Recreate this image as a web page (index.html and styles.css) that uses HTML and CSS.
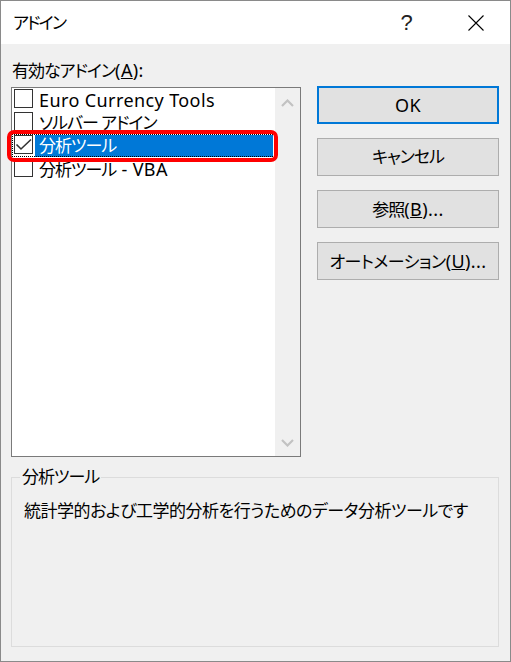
FILE: index.html
```html
<!DOCTYPE html>
<html lang="ja">
<head>
<meta charset="utf-8">
<title>アドイン</title>
<link rel="stylesheet" href="styles.css">
</head>
<body>
<div class="window">
  <div class="titlebar">
    <span class="title">アドイン</span>
    <div class="tb-btn help">?</div>
    <div class="tb-btn close">
      <svg width="16" height="16" viewBox="0 0 16 16"><path d="M0.5 0.5L15.5 15.5M15.5 0.5L0.5 15.5" stroke="#000" stroke-width="1.1" fill="none"/></svg>
    </div>
  </div>
  <div class="body">
    <div class="main">
      <div class="left">
        <div class="label">有効なアドイン<span class="en">(<u>A</u>):</span></div>
        <div class="listbox">
          <ul class="items">
            <li class="item"><span class="cb"></span><span class="text"><span class="en">Euro Currency Tools</span></span></li>
            <li class="item"><span class="cb"></span><span class="text">ソルバー アドイン</span></li>
            <li class="item selected"><span class="cb"><svg width="19" height="19" viewBox="0 0 19 19"><path d="M2.5 9.5L7 14L17 4.5" stroke="#333" stroke-width="1.6" fill="none"/></svg></span><span class="text">分析ツール</span></li>
            <li class="item"><span class="cb"></span><span class="text">分析ツール<span class="en"> - VBA</span></span></li>
          </ul>
          <div class="scrollbar">
            <div class="sb-up"><svg width="13" height="8" viewBox="0 0 13 8"><path d="M1 7L6.5 1.5L12 7" stroke="#c2c2c2" stroke-width="2.2" fill="none"/></svg></div>
            <div class="sb-track"></div>
            <div class="sb-down"><svg width="13" height="8" viewBox="0 0 13 8"><path d="M1 1L6.5 6.5L12 1" stroke="#c2c2c2" stroke-width="2.2" fill="none"/></svg></div>
          </div>
        </div>
      </div>
      <div class="buttons">
        <button class="btn default"><span class="en">OK</span></button>
        <button class="btn">キャンセル</button>
        <button class="btn">参照<span class="en">(<u>B</u>)...</span></button>
        <button class="btn long">オートメーション<span class="en">(<u>U</u>)...</span></button>
      </div>
    </div>
    <fieldset class="group">
      <legend>分析ツール</legend>
      <p class="desc">統計学的および工学的分析を行うためのデータ分析ツールです</p>
    </fieldset>
  </div>
  <div class="annotation"></div>
</div>
</body>
</html>
```

FILE: styles.css
```css
* { box-sizing: border-box; }

html, body {
  margin: 0;
  padding: 0;
  background: #f0f0f0;
}

body {
  font-family: "Noto Sans", "Noto Sans CJK JP", sans-serif;
  font-size: 17px;
  letter-spacing: -1px;
  font-feature-settings: "palt" 1;
  color: #000;
}

.en {
  font-size: 18px;
  letter-spacing: 0.4px;
}

.window {
  position: relative;
  width: 511px;
  height: 662px;
  border: 1px solid #8a8a8a;
  background: #f0f0f0;
  display: flex;
  flex-direction: column;
}

.titlebar {
  height: 43px;
  background: #fff;
  display: flex;
  align-items: center;
  padding-left: 12px;
}

.title {
  flex: 1;
  font-size: 17px;
  letter-spacing: -1.8px;
  line-height: 22px;
}

.tb-btn {
  width: 69px;
  height: 43px;
  display: flex;
  align-items: center;
  justify-content: center;
}

.help {
  font-family: "Liberation Sans", sans-serif;
  font-size: 22px;
  letter-spacing: 0;
  color: #222;
  padding-top: 1px;
}

.close svg { display: block; }

.body {
  flex: 1;
  padding: 15px 11px 0 10px;
  display: flex;
  flex-direction: column;
}

.main {
  display: flex;
  gap: 16px;
}

.left {
  width: 290px;
  display: flex;
  flex-direction: column;
}

.label {
  height: 22px;
  line-height: 22px;
  margin-bottom: 6px;
  padding-left: 1px;
}

.listbox {
  height: 370px;
  border: 1px solid #7a7a7a;
  background: #fff;
  display: flex;
}

.items {
  list-style: none;
  margin: 0;
  padding: 0;
  flex: 1;
}

.item {
  height: 23px;
  display: flex;
  padding-left: 2px;
  padding-right: 2px;
}

.cb {
  width: 19px;
  height: 19px;
  margin-top: 1px;
  border: 1px solid #333;
  background: #fff;
  flex: none;
}

.cb svg {
  display: block;
  margin: -1px 0 0 -1px;
}

.text {
  flex: 1;
  height: 22px;
  line-height: 22px;
  margin-top: 1px;
  margin-left: 2px;
  padding-left: 4px;
  white-space: nowrap;
}

.item.selected {
  outline: 1px dotted #000;
  outline-offset: -1px;
}

.item.selected .text {
  background: #0078d7;
  color: #fff;
}

.scrollbar {
  width: 25px;
  background: #f0f0f0;
  display: flex;
  flex-direction: column;
}

.sb-up {
  height: 30px;
  display: flex;
  align-items: center;
  justify-content: center;
}

.sb-track { flex: 1; }

.sb-down {
  height: 26px;
  display: flex;
  align-items: center;
  justify-content: center;
}

.scrollbar svg { display: block; }

.buttons {
  width: 182px;
  padding-top: 27px;
  display: flex;
  flex-direction: column;
  gap: 14px;
}

.btn {
  height: 38px;
  width: 182px;
  padding: 0;
  background: #e1e1e1;
  border: 1px solid #adadad;
  font: inherit;
  letter-spacing: -1px;
  color: #000;
  line-height: 22px;
}

.btn.long { letter-spacing: -0.5px; }

.btn .en { letter-spacing: 0.4px; }

.btn.default {
  border: 2px solid #0078d7;
}

.group {
  margin: 9px 0 0 0;
  width: 488px;
  height: 181px;
  border: 1px solid #dcdcdc;
  padding: 12px 8px 0 8px;
}

.group legend {
  padding: 0 2px;
  line-height: 22px;
}

.desc {
  margin: 0 0 0 4px;
  line-height: 22px;
  letter-spacing: -0.5px;
  white-space: nowrap;
}

.annotation {
  position: absolute;
  left: 6px;
  top: 129px;
  width: 271px;
  height: 32px;
  border: 4px solid #ff0000;
  border-radius: 7px;
  pointer-events: none;
}
```
